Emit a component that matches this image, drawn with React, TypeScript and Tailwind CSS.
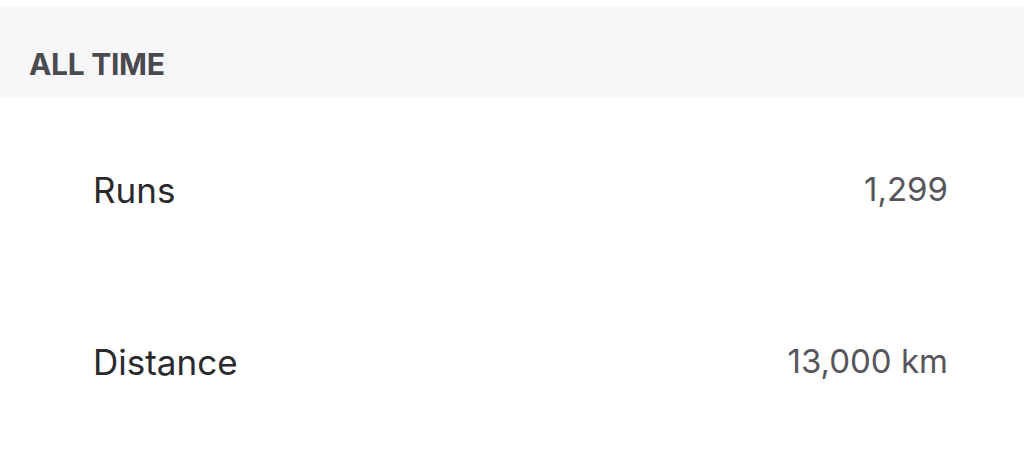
import React from 'react';

const STATS = [
  { label: 'Runs', value: '1,299', h: 'h-[184px]' },
  { label: 'Distance', value: '13,000 km', h: 'h-[160px]' },
];

const App: React.FC = () => {
  return (
    <div className="w-[1024px] h-[457px] bg-white overflow-hidden pt-[6px]" style={{ fontFamily: 'Inter, "Noto Sans", sans-serif' }}>
      <div className="h-[92px] bg-[#f7f7f9] flex items-center pt-[24px] px-[29px]">
        <h2 className="text-[30px] font-bold text-[#4a4a50] tracking-[-0.01em] uppercase">All Time</h2>
      </div>
      {STATS.map((s) => (
        <div key={s.label} className={`${s.h} flex items-center justify-between pl-[93px] pr-[76px]`}>
          <span className="text-[35px] text-[#2a2a2e]">{s.label}</span>
          <span className="text-[33px] text-[#56565c]">{s.value}</span>
        </div>
      ))}
    </div>
  );
};

export default App;
